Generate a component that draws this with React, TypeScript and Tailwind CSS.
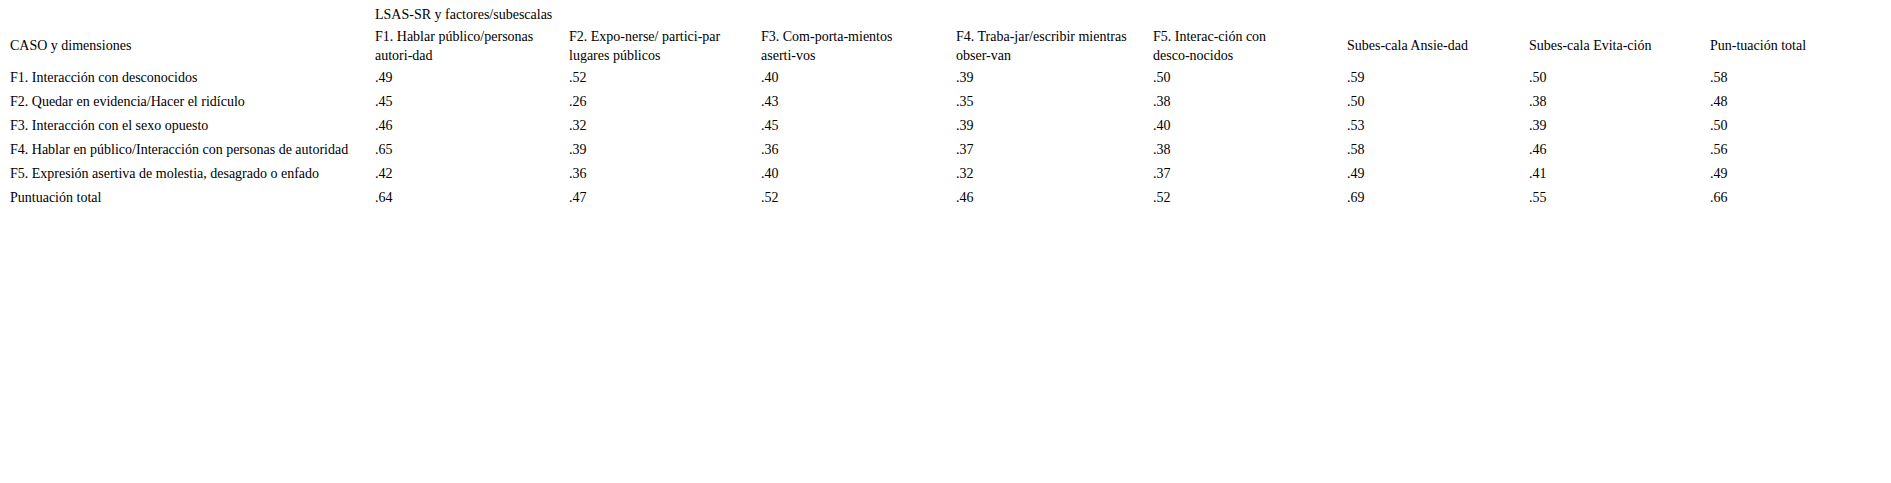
import React from "react";

const cols =
  "grid grid-cols-[365px_194px_192px_195px_197px_194px_182px_181px_1fr]";

const rows: [string, string[]][] = [
  ["F1. Interacción con desconocidos", [".49", ".52", ".40", ".39", ".50", ".59", ".50", ".58"]],
  ["F2. Quedar en evidencia/Hacer el ridículo", [".45", ".26", ".43", ".35", ".38", ".50", ".38", ".48"]],
  ["F3. Interacción con el sexo opuesto", [".46", ".32", ".45", ".39", ".40", ".53", ".39", ".50"]],
  ["F4. Hablar en público/Interacción con personas de autoridad", [".65", ".39", ".36", ".37", ".38", ".58", ".46", ".56"]],
  ["F5. Expresión asertiva de molestia, desagrado o enfado", [".42", ".36", ".40", ".32", ".37", ".49", ".41", ".49"]],
  ["Puntuación total", [".64", ".47", ".52", ".46", ".52", ".69", ".55", ".66"]],
];

export default function App() {
  return (
    <div className="w-[1891px] h-[483px] bg-white text-black font-['Liberation_Serif','Times_New_Roman',serif] text-[14px] leading-[19px] pl-[10px] pt-[5px]">
      <div className={cols}>
        <div />
        <div className="col-span-8 whitespace-nowrap">LSAS-SR y factores/subescalas</div>
      </div>
      <div className={`${cols} mt-[2.5px] items-center`}>
        <div>CASO y dimensiones</div>
        <div>
          F1. Hablar público/personas
          <br />
          autori-dad
        </div>
        <div>
          F2. Expo-nerse/ partici-par
          <br />
          lugares públicos
        </div>
        <div>
          F3. Com-porta-mientos
          <br />
          aserti-vos
        </div>
        <div>
          F4. Traba-jar/escribir mientras
          <br />
          obser-van
        </div>
        <div>
          F5. Interac-ción con
          <br />
          desco-nocidos
        </div>
        <div>Subes-cala Ansie-dad</div>
        <div>Subes-cala Evita-ción</div>
        <div>Pun-tuación total</div>
      </div>
      <div className="mt-[3px]">
        {rows.map(([label, vals]) => (
          <div key={label} className={`${cols} h-[24px]`}>
            <div className="whitespace-nowrap">{label}</div>
            {vals.map((v, i) => (
              <div key={i}>{v}</div>
            ))}
          </div>
        ))}
      </div>
    </div>
  );
}
